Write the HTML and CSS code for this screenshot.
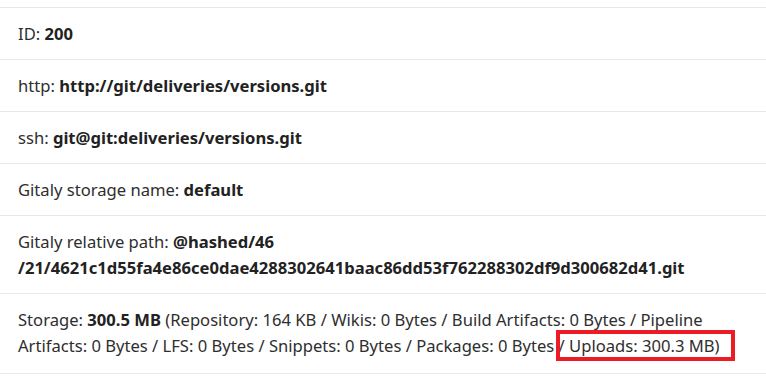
FILE: index.html
```html
<!DOCTYPE html>
<html>
<head>
<meta charset="utf-8">
<link rel="stylesheet" href="styles.css">
</head>
<body>
<ul class="info-list">
  <li class="info-row">ID: <strong>200</strong></li>
  <li class="info-row">http: <strong>http://git/deliveries/versions.git</strong></li>
  <li class="info-row">ssh: <strong>git@git:deliveries/versions.git</strong></li>
  <li class="info-row">Gitaly storage name: <strong>default</strong></li>
  <li class="info-row">Gitaly relative path: <strong class="path">@hashed/46 /21/4621c1d55fa4e86ce0dae4288302641baac86dd53f762288302df9d300682d41.git</strong></li>
  <li class="info-row">Storage: <strong>300.5 MB</strong> (Repository: 164 KB / Wikis: 0 Bytes / Build Artifacts: 0 Bytes / Pipeline Artifacts: 0 Bytes / LFS: 0 Bytes / Snippets: 0 Bytes / Packages: 0 Bytes <span class="highlight">/ Uploads: 300.3 MB)</span></li>
</ul>
</body>
</html>
```
FILE: styles.css
```css
html, body {
  margin: 0;
  padding: 0;
  background: #ffffff;
}
body {
  font-family: "Noto Sans", "Open Sans", sans-serif;
  font-size: 16.6px;
  color: #2e2e2e;
}
.info-list {
  list-style: none;
  margin: 7px 0 0 0;
  padding: 0;
  display: flex;
  flex-direction: column;
}
.info-row {
  border-top: 1px solid #e8e8e8;
  padding: 12.5px 18px;
  line-height: 26px;
}
.info-row:last-child {
  border-bottom: 1px solid #e8e8e8;
  padding-bottom: 14.5px;
}
.info-row strong {
  font-weight: 700;
  color: #222;
}
.highlight {
  position: relative;
}
.highlight::after {
  content: "";
  position: absolute;
  left: -3px;
  right: -15px;
  top: -4px;
  bottom: -4px;
  border: 4px solid #ec1c24;
}
```
